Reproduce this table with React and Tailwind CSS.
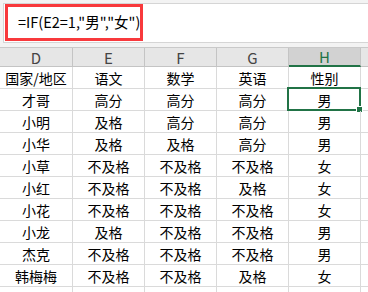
const columns = ["D", "E", "F", "G", "H"];

const rows = [
    ["国家/地区", "语文", "数学", "英语", "性别"],
    ["才哥", "高分", "高分", "高分", "男"],
    ["小明", "及格", "高分", "高分", "男"],
    ["小华", "及格", "及格", "高分", "男"],
    ["小草", "不及格", "不及格", "不及格", "女"],
    ["小红", "不及格", "不及格", "及格", "女"],
    ["小花", "不及格", "不及格", "不及格", "女"],
    ["小龙", "及格", "不及格", "不及格", "男"],
    ["杰克", "不及格", "不及格", "不及格", "男"],
    ["韩梅梅", "不及格", "不及格", "及格", "女"],
    ["", "", "", "", ""],
];

const widths = ["w-[73px]", "w-[72px]", "w-[72px]", "w-[72px]", "w-[72px]"];

const App = () => {
    return (
        <div
            className="w-[368px] h-[292px] overflow-hidden bg-white text-black"
            style={{ fontFamily: '"Noto Sans CJK SC", "Liberation Sans", sans-serif' }}
        >
            {/* formula bar */}
            <div className="h-[47px] bg-[#f3f3f3] pt-[3px] pl-[3px]">
                <div className="h-[40px] bg-white border-l border-y border-[#d5d5d5] pl-px">
                    <div className="w-[138px] h-[37px] border-[3px] border-[#f8393c] flex items-center pl-[10px] text-[14.5px] leading-none">
                        =IF(E2=1,"男","女")
                    </div>
                </div>
            </div>

            {/* column headers */}
            <div className="flex border-t border-[#c9c9c9] bg-[#e6e6e6] text-[15px] text-[#444]">
                {columns.map((col, i) => (
                    <div
                        key={col}
                        className={`${widths[i]} h-[19px] shrink-0 flex items-center justify-center border-r border-[#c4c4c4] leading-none ${
                            col === "H"
                                ? "bg-[#d2d2d2] text-[#217346] border-b-2 border-b-[#217346]"
                                : "border-b border-b-[#c4c4c4]"
                        }`}
                    >
                        {col}
                    </div>
                ))}
                <div className="flex-1 h-[19px] border-b border-[#c4c4c4]"></div>
            </div>

            {/* cells */}
            {rows.map((row, r) => (
                <div key={r} className="flex text-[14px]">
                    {row.map((cell, c) => (
                        <div
                            key={c}
                            className={`${widths[c]} h-[22px] shrink-0 relative flex items-center justify-center border-r border-b border-[#dadada] leading-none`}
                        >
                            {cell}
                            {r === 1 && c === 4 && (
                                <div className="absolute -top-[2px] -left-[2px] -right-px -bottom-px border-2 border-[#217346]">
                                    <div className="absolute -right-[4px] -bottom-[4px] w-[7px] h-[7px] bg-[#217346] border border-white"></div>
                                </div>
                            )}
                        </div>
                    ))}
                    <div className="flex-1 h-[22px] border-b border-[#dadada]"></div>
                </div>
            ))}
        </div>
    );
};

export default App;
